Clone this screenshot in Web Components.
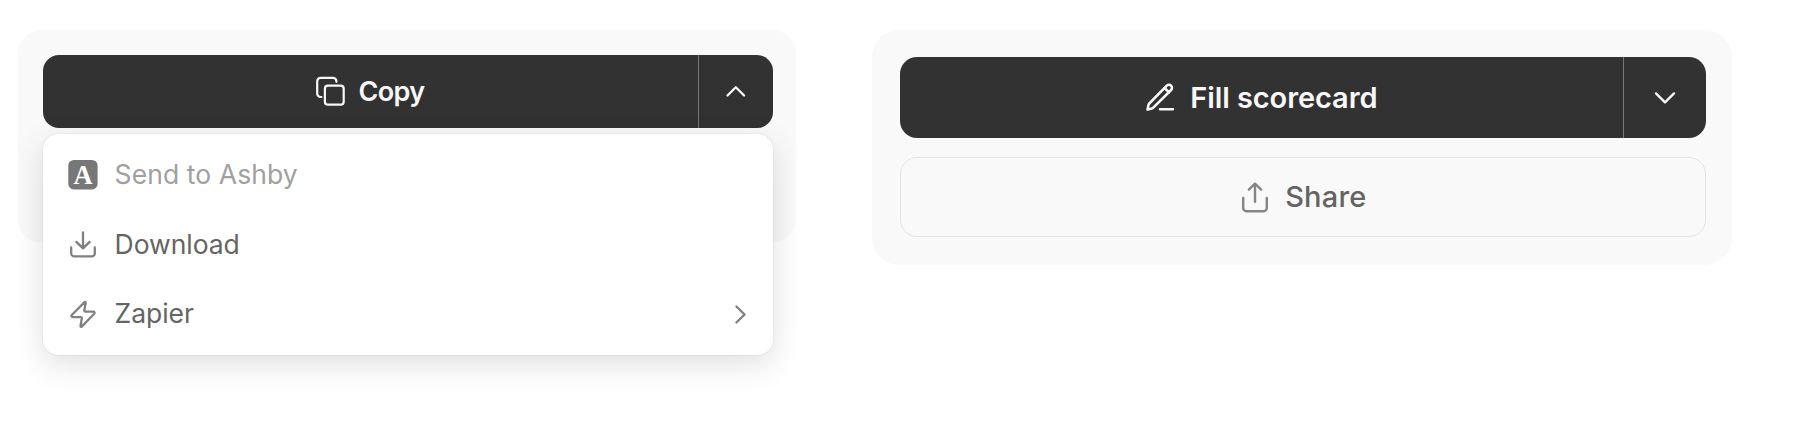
<!DOCTYPE html>
<html lang="en">
<head>
<meta charset="utf-8">
<title>Actions</title>
<style>
body{margin:0;background:#fff;font-family:Inter,"Liberation Sans",sans-serif;height:422px;overflow:hidden}
</style>
</head>
<body>
<action-demo></action-demo>
<script>
const icons = {
  copy: [30, 30, '<rect x="9.9" y="8.700" width="18.8" height="19" rx="3"/><path d="M6.400 20H5.700a3.500 3.500 0 0 1-3.500-3.500V4.300a3.500 3.500 0 0 1 3.500-3.500h12.200a3.500 3.500 0 0 1 3.500 3.500v.5"/>', 2.2],
  up: [20, 12, '<path d="M1.500 9.500 9.800 1.200l8.300 8.300"/>', 2.3],
  down: [22, 14, '<path d="M2 2.400 11 11.400l9-9"/>', 2.3],
  right: [12, 19, '<path d="M1.400 2.500 9.600 10.500l-8.200 8"/>', 2.3],
  pen: [30, 30, '<path d="M21.800 2.700a3 3 0 0 1 4.300 4.300L8.300 24.700c-.4.400-.9.700-1.400.8L2.500 26.600l1-4.700c.1-.5.4-1 .8-1.400z"/><path d="m19.600 5 4.400 4.400M15 26.300h12.900"/>', 2.5],
  download: [30, 30, '<path d="M15 3.400v15.600M8.400 12.900l6.600 6.400 6.600-6.400M3.200 18.400v6a3 3 0 0 0 3 3h17.600a3 3 0 0 0 3-3v-6"/>', 2.3],
  zap: [30, 30, '<path d="M16.600 3.100c.5-.5 1.200-.1 1.100.6l-1.400 7.600c-.1.700.4 1.300 1.100 1.300h7.900c1.200 0 1.700 1.300.9 2.100L13.700 27.600c-.5.500-1.300.1-1.200-.6l1.300-7.600c.1-.7-.4-1.300-1.100-1.300H4.700c-1.200 0-1.700-1.300-.9-2.100z"/>', 2.3],
  share: [28, 32, '<path d="M14 2.800v18M7.900 8.700 14 2.500l6.100 6.200M2.200 17v10a3.200 3.200 0 0 0 3.200 3.200h17.200a3.200 3.200 0 0 0 3.200-3.200v-10"/>', 2.400]
};
function define(name, css, html) {
  customElements.define(name, class extends HTMLElement {
    connectedCallback() {
      if (this.shadowRoot) return;
      const t = document.createElement('template');
      t.innerHTML = '<style>*{box-sizing:border-box}' + css + '</style>' + html;
      this.attachShadow({mode: 'open'}).append(t.content.cloneNode(true));
    }
  });
}
customElements.define('line-icon', class extends HTMLElement {
  connectedCallback() {
    const [w, h, d, s] = icons[this.getAttribute('name')];
    this.attachShadow({mode: 'open'}).innerHTML =
      `<style>:host{display:block;flex:none;width:${w}px;height:${h}px}svg{display:block;overflow:visible}</style>
       <svg width="${w}" height="${h}" viewBox="0 0 ${w} ${h}" fill="none" stroke="currentColor" stroke-width="${s}" stroke-linecap="round" stroke-linejoin="round">${d}</svg>`;
  }
});
define('ashby-badge',
  ':host{display:block;flex:none;width:30px;height:30px}svg{display:block}text{font:bold 26.500px "Liberation Serif",serif}',
  '<svg width="30" height="30"><rect x=".3" y="0" width="29.300" height="29.400" rx="5.500" fill="#777"/><text x="15" y="23.500" text-anchor="middle" fill="#fff">A</text></svg>');
define('action-panel',
  ':host{display:block;flex:none;box-sizing:border-box;background:#f9f9f9;border-radius:var(--r)}', '<slot></slot>');
define('split-button',
  `:host{display:flex;position:relative;background:#323232;color:#f8f8f8;overflow:hidden;border-radius:var(--br)}
   .main{flex:1;display:flex;align-items:center;justify-content:center;font-weight:600}
   .toggle{width:var(--tw);border-left:1px solid #777;display:flex;align-items:center;justify-content:center}`,
  '<div class="main"><slot></slot></div><div class="toggle"><slot name="toggle"></slot></div>');
define('outline-button',
  ':host{display:flex;box-sizing:border-box;align-items:center;justify-content:center;border:1px solid #e4e4e4;border-radius:17px;color:#646464;font-weight:500}',
  '<slot></slot>');
define('drop-menu',
  `:host{display:block;box-sizing:border-box;position:absolute;top:79px;left:0;width:100%;height:221px;padding:6px 0;background:#fff;border-radius:15px;
   box-shadow:0 0 1.500px rgba(0,0,0,.16),0 9px 32px rgba(0,0,0,.13)}`, '<slot></slot>');
define('menu-item',
  `:host{display:flex;align-items:center;height:69.500px;padding:0 25.500px 0 25.500px;gap:17px;color:#646464;font-size:26.500px;line-height:32px;letter-spacing:-.05px}
   .label{flex:1;padding-bottom:1.400px;margin-left:-.5px} ::slotted(line-icon){color:#808080}`,
  '<slot name="icon"></slot><span class="label"><slot></slot></span><slot name="end"></slot>');
define('action-demo',
  `:host{display:flex;align-items:flex-start;padding:30px 0 0 17.600px;gap:76.500px}
   .left{width:778.400px;height:212.700px;padding:25px 23.300px 0 25px;--r:24px}
   .wrap{position:relative}
   .left split-button{height:73px;--br:16px;--tw:75.200px;font-size:27px}
   .right{width:859.500px;height:235px;padding:27.400px 26.300px 0 27.500px;--r:27px}
   .right split-button{height:80.800px;--br:17px;--tw:83px;font-size:29px}
   outline-button{height:80.500px;margin-top:18.800px;padding-left:2px;font-size:29px}
   .copy{margin-left:13px;letter-spacing:-.6px}.fill{margin-left:15px;letter-spacing:-.08px}.share{margin-left:16px;padding-bottom:2px;letter-spacing:.2px}
   .fill{padding-bottom:1px}
   .muted{color:#a0a0a0;letter-spacing:.08px}.gray{color:#858585}`,
  `<action-panel class="left"><div class="wrap">
     <split-button><line-icon name="copy"></line-icon><span class="copy">Copy</span><line-icon slot="toggle" name="up"></line-icon></split-button>
     <drop-menu>
       <menu-item class="muted"><ashby-badge slot="icon"></ashby-badge>Send to Ashby</menu-item>
       <menu-item><line-icon slot="icon" name="download"></line-icon>Download</menu-item>
       <menu-item><line-icon slot="icon" name="zap"></line-icon>Zapier<line-icon slot="end" name="right"></line-icon></menu-item>
     </drop-menu></div>
   </action-panel>
   <action-panel class="right">
     <split-button><line-icon name="pen"></line-icon><span class="fill">Fill scorecard</span><line-icon slot="toggle" name="down"></line-icon></split-button>
     <outline-button><line-icon class="gray" name="share"></line-icon><span class="share">Share</span></outline-button>
   </action-panel>`);
</script>
</body>
</html>
